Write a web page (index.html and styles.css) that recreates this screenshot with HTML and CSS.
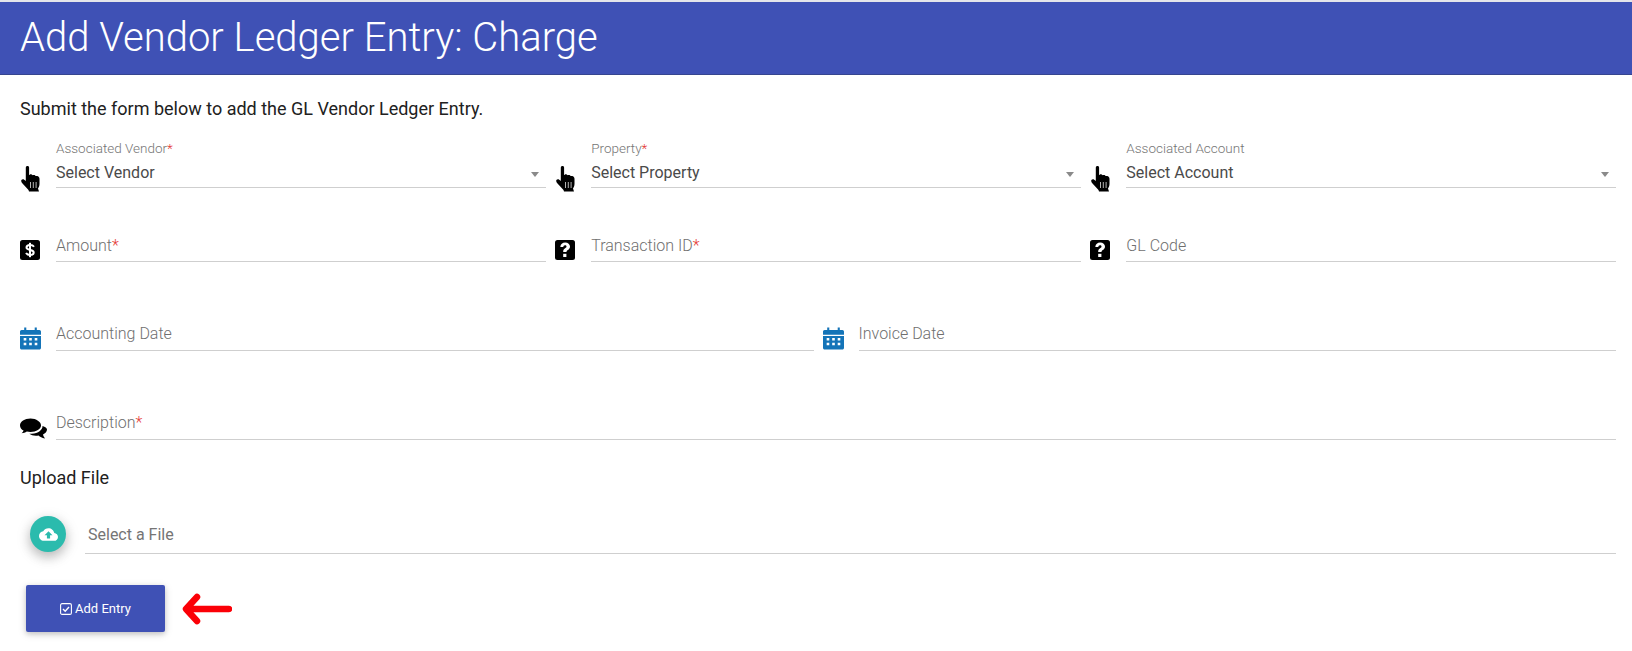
FILE: index.html
```html
<!DOCTYPE html>
<html lang="en">
<head>
<meta charset="utf-8">
<title>Add Vendor Ledger Entry: Charge</title>
<link rel="stylesheet" href="styles.css">
</head>
<body>
<svg class="defs" width="0" height="0" aria-hidden="true">
  <defs>
    <symbol id="hand" viewBox="0 0 20 26">
      <path d="M6.500 0c1 0 1.600.7 1.600 1.600V9l.6-.1v-.4c1.200-.6 2.400-.3 2.800.7l.4-.1c1.300-.5 2.400 0 2.800 1 .4-.1 1-.2 1.400-.1 1.400.3 2.400 1.400 2.400 2.800v5c0 2-.7 3.400-1.500 4.800L18 25.500H8L7.500 24C5.500 21.800 3.500 19.700 1.500 17.500.7 16.700.2 15.800.2 15c0-1 .8-1.800 1.800-1.700.8 0 1.500.5 2.800 1.700V1.700C4.800.7 5.500 0 6.500 0z" fill="#000"/>
      <path d="M9.500 16v6M12.300 16v6M15.100 16v6" stroke="#fff" stroke-width=".7" fill="none"/>
    </symbol>
    <symbol id="help" viewBox="0 0 20 20">
      <rect width="20" height="20" rx="2.500" fill="#000"/>
      <path d="M5.300 7c.2-3 2.200-4.600 4.900-4.600 2.800 0 4.800 1.700 4.800 4 0 1.700-.9 2.700-2.200 3.600-1 .7-1.300 1.100-1.300 2.100H8.200c-.1-1.800.5-2.900 1.900-3.800 1-.7 1.400-1.100 1.400-1.800 0-.8-.6-1.300-1.500-1.300-1.100 0-1.600.7-1.700 1.800z" fill="#fff"/>
      <rect x="8.200" y="13.800" width="3.200" height="3.200" fill="#fff"/>
    </symbol>
    <symbol id="dollar" viewBox="0 0 20 20">
      <rect width="20" height="20" rx="2.500" fill="#000"/>
      <path d="M14 6.700c-.7-1.100-2.300-1.700-4-1.700-2 0-3.500.9-3.500 2.500 0 3.300 7.200 1.700 7.200 4.900 0 1.500-1.600 2.500-3.600 2.500-1.800 0-3.400-.7-4.100-1.900" fill="none" stroke="#fff" stroke-width="2"/>
      <rect x="9" y="2.800" width="2" height="14.400" fill="#fff"/>
    </symbol>
    <symbol id="calendar" viewBox="0 0 20 21">
      <path fill="#1474b8" fill-rule="evenodd" d="M4 0h2v2.500h8V0h2v2.500h2.500c.8 0 1.500.7 1.500 1.500v3H0V4c0-.8.700-1.500 1.500-1.500H4zM0 8h20v11.500c0 .8-.7 1.500-1.500 1.500h-17C.7 21 0 20.300 0 19.500zM3.500 10v2.500H6V10zm5.250 0v2.500h2.500V10zM14 10v2.500h2.500V10zM3.500 14.500V17H6v-2.500zm5.250 0V17h2.500v-2.500zm5.250 0V17h2.500v-2.500z"/>
    </symbol>
    <symbol id="comments" viewBox="0 0 27 21">
      <path fill="#000" d="M10.500 0C4.700 0 0 3 0 6.900c0 2.200 1.400 4 3.600 5.200-.4 1-1.100 1.900-2 2.700 1.800-.2 3.700-.9 5.200-1.800 1.200.3 2.400.4 3.700.4 5.800 0 10.500-3 10.500-6.500S16.300 0 10.500 0z"/>
      <path fill="#000" d="M22.500 7.400c.2 3.800-4.300 7.400-10.700 7.800-1 .1-1.700.1-2.500 0 1.700 1.300 4 2 6.500 2 .9 0 1.800-.1 2.700-.3 1.500 1.300 3.500 2.500 6.500 3-.8-1-1.600-2-2-3.800C25.200 15 27 13 27 11c0-1.600-1.800-2.900-4.500-3.600z"/>
    </symbol>
  </defs>
</svg>

<header class="page-title"><h1 class="page-title-text">Add Vendor Ledger Entry: Charge</h1></header>

<main class="content">
  <p class="intro">Submit the form below to add the GL Vendor Ledger Entry.</p>

  <div class="row row-select">
    <div class="field">
      <svg class="icon icon-hand"><use href="#hand"/></svg>
      <div class="control">
        <span class="float-label">Associated Vendor<span class="req">*</span></span>
        <span class="value">Select Vendor</span>
        <span class="caret"></span>
      </div>
    </div>
    <div class="field">
      <svg class="icon icon-hand"><use href="#hand"/></svg>
      <div class="control">
        <span class="float-label">Property<span class="req">*</span></span>
        <span class="value">Select Property</span>
        <span class="caret"></span>
      </div>
    </div>
    <div class="field">
      <svg class="icon icon-hand"><use href="#hand"/></svg>
      <div class="control">
        <span class="float-label">Associated Account</span>
        <span class="value">Select Account</span>
        <span class="caret"></span>
      </div>
    </div>
  </div>

  <div class="row row-text">
    <div class="field">
      <svg class="icon icon-box"><use href="#dollar"/></svg>
      <div class="control"><span class="placeholder">Amount<span class="req">*</span></span></div>
    </div>
    <div class="field">
      <svg class="icon icon-box"><use href="#help"/></svg>
      <div class="control"><span class="placeholder">Transaction ID<span class="req">*</span></span></div>
    </div>
    <div class="field">
      <svg class="icon icon-box"><use href="#help"/></svg>
      <div class="control"><span class="placeholder">GL Code</span></div>
    </div>
  </div>

  <div class="row row-dates">
    <div class="field">
      <svg class="icon icon-cal"><use href="#calendar"/></svg>
      <div class="control"><span class="placeholder">Accounting Date</span></div>
    </div>
    <div class="field">
      <svg class="icon icon-cal"><use href="#calendar"/></svg>
      <div class="control"><span class="placeholder">Invoice Date</span></div>
    </div>
  </div>

  <div class="row row-desc">
    <div class="field">
      <svg class="icon icon-comments"><use href="#comments"/></svg>
      <div class="control"><span class="placeholder">Description<span class="req">*</span></span></div>
    </div>
  </div>

  <h2 class="upload-title">Upload File</h2>

  <div class="upload">
    <span class="fab">
      <svg class="fab-icon" viewBox="0 0 24 16"><path fill="#fff" d="M19.300 6.100C18.700 2.600 15.600 0 12 0 9.100 0 6.600 1.600 5.400 4 2.300 4.300 0 6.900 0 10c0 3.300 2.700 6 6 6h13c2.800 0 5-2.200 5-5 0-2.600-2.100-4.700-4.700-4.900zM14 9v4h-4V9H7l5-5 5 5z"/></svg>
    </span>
    <div class="file-control"><span class="file-text">Select a File</span></div>
  </div>

  <div class="actions">
    <button class="submit" type="button">
      <svg class="check" viewBox="0 0 12 12"><rect x=".6" y=".6" width="10.800" height="10.800" rx="1.500" fill="none" stroke="#fff" stroke-width="1.100"/><path d="M3 6l2.200 2.200L9 4" fill="none" stroke="#fff" stroke-width="1.400"/></svg>
      Add Entry
    </button>
    <svg class="arrow" viewBox="0 0 50 32"><path d="M47 16H5M15 4L4 16l11 12" fill="none" stroke="#fb0007" stroke-width="6.500" stroke-linecap="round" stroke-linejoin="round"/></svg>
  </div>
</main>
</body>
</html>
```

FILE: styles.css
```css
* { box-sizing: border-box; }
html, body { margin: 0; padding: 0; background: #fff; }
body { font-family: Roboto, "Liberation Sans", sans-serif; color: #212121; border-top: 2px solid #e4e5ea; height: 651px; overflow: hidden; }
.defs { position: absolute; }

.page-title { height: 73px; background: #3f51b5; border-bottom: 1px solid #36458f; padding-left: 20px; }
.page-title-text { margin: 0; color: #fff; font-weight: 300; font-size: 40px; line-height: 71px; }

.content { padding: 0 16px 0 20px; }
.intro { margin: 0; padding-top: 24px; height: 66px; font-size: 18px; line-height: 20px; }

.row { display: flex; }
.row-select { height: 95px; gap: 9.500px; }
.row-text { height: 88px; gap: 9.500px; }
.row-dates { height: 89px; gap: 9px; }
.row-desc { height: 53px; }
.field { flex: 1; display: flex; align-items: flex-start; min-width: 0; }

.icon { flex: none; display: block; }
.icon-hand { width: 20px; height: 26px; margin: 25px 15px 0 1px; }
.icon-box { width: 20px; height: 20px; margin-top: 4px; margin-right: 16px; }
.icon-cal { width: 21px; height: 23px; margin-top: 3px; margin-right: 15px; }
.icon-comments { width: 27px; height: 22px; margin-top: 5px; margin-right: 9px; }

.control { flex: 1; position: relative; min-width: 0; border-bottom: 1px solid #cfcfcf; }
.row-select .control { height: 47px; display: flex; flex-direction: column; }
.row-text .control { height: 26px; }
.row-dates .control, .row-desc .control { height: 27px; }

.float-label { font-size: 13.500px; font-weight: 300; line-height: 14px; color: #757575; height: 20px; }
.value { font-size: 16px; line-height: 24px; color: #4a4a4a; }
.caret { position: absolute; right: 7px; top: 31px; width: 0; height: 0; border-left: 4px solid transparent; border-right: 4px solid transparent; border-top: 5px solid #8a8a8a; }
.placeholder { font-size: 16px; font-weight: 300; line-height: 20px; color: #6f6f6f; display: block; }
.req { color: #e53935; }

.upload-title { margin: 0; font-size: 18px; font-weight: 400; line-height: 24px; height: 50px; color: #212121; }

.upload { display: flex; align-items: flex-start; padding-left: 10px; height: 69px; }
.fab { flex: none; width: 36px; height: 36px; border-radius: 50%; background: #2bbbad; box-shadow: 0 5px 11px rgba(0,0,0,.18), 0 4px 15px rgba(0,0,0,.15); display: flex; align-items: center; justify-content: center; margin-right: 19px; }
.fab-icon { width: 19px; height: 13px; display: block; }
.file-control { flex: 1; height: 38px; border-bottom: 1px solid #cfcfcf; padding: 8px 0 0 3px; }
.file-text { font-size: 16px; line-height: 22px; color: #757575; }

.actions { display: flex; align-items: center; padding-left: 6px; }
.submit { width: 139px; height: 47px; border: 0; border-radius: 2px; background: #3f51b5; color: #fff; font-family: Roboto, "Liberation Sans", sans-serif; font-size: 13px; display: flex; align-items: center; justify-content: center; gap: 3px; padding: 0; box-shadow: 0 2px 5px rgba(0,0,0,.16), 0 2px 10px rgba(0,0,0,.12); }
.check { width: 12px; height: 12px; display: block; }
.arrow { width: 50px; height: 32px; margin-left: 17px; display: block; }
```
